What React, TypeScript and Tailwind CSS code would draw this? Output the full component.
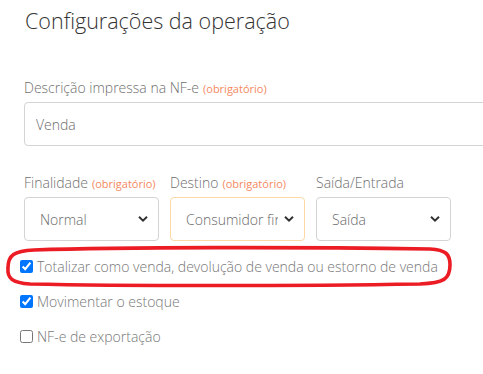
import { useState } from 'react';

// Operation settings form fragment — NF-e description, three selects
// and the totalizer / stock / export checkboxes. The red hand-drawn
// ring is an annotation overlay sitting on top of the first checkbox.

const font = { fontFamily: '"Open Sans", "Noto Sans", sans-serif' };

function Required() {
  return <span className="ml-1 text-[11px] font-normal text-[#f4895f]">(obrigatório)</span>;
}

function Chevron() {
  return (
    <svg
      viewBox="0 0 10 7"
      className="pointer-events-none absolute right-[11px] top-1/2 h-[7px] w-[10px] -translate-y-1/2"
    >
      <path d="M1 1.2 5 5.2 9 1.2" fill="none" stroke="#333" strokeWidth="2" />
    </svg>
  );
}

function SelectField({
  label,
  required,
  options,
  highlight,
}: {
  label: string;
  required?: boolean;
  options: string[];
  highlight?: boolean;
}) {
  return (
    <div className="flex w-[135px] flex-col">
      <label className="h-[22px] whitespace-nowrap text-[14px] leading-[22px] text-[#6f6f6f]">
        {label}
        {required && <Required />}
      </label>
      <div className="relative mt-[3px]">
        <select
          className={`h-[44px] w-full appearance-none overflow-hidden rounded-[4px] border bg-white pl-[15px] pr-[26px] text-[14px] font-light text-[#6a6a6a] outline-none ${
            highlight ? 'border-[#fcd9a4]' : 'border-[#d4d4d4]'
          }`}
          style={font}
          defaultValue={options[0]}
        >
          {options.map((o) => (
            <option key={o}>{o}</option>
          ))}
        </select>
        <Chevron />
      </div>
    </div>
  );
}

function Check({ label, checked }: { label: string; checked?: boolean }) {
  const [on, setOn] = useState(!!checked);
  return (
    <label className="flex h-[35px] items-center text-[14px] text-[#777]">
      <input
        type="checkbox"
        checked={on}
        onChange={() => setOn((v) => !v)}
        className="m-0 ml-[20px] mr-[4px] h-[13px] w-[13px] accent-[#0075ff]"
      />
      {label}
    </label>
  );
}

export default function App() {
  return (
    <div className="relative h-[374px] w-[483px] overflow-hidden bg-white font-light" style={font}>
      <h1 className="pl-[25px] pt-[5px] text-[21.5px] leading-[32px] text-[#333]">
        Configurações da operação
      </h1>

      <div className="mt-[40px] pl-[24px]">
        <label className="block h-[22px] whitespace-nowrap text-[14px] leading-[22px] text-[#6f6f6f]">
          Descrição impressa na NF-e
          <Required />
        </label>
        <input
          defaultValue="Venda"
          className="mt-[3px] h-[44px] w-[500px] rounded-[4px] border border-[#d4d4d4] px-[11px] text-[14px] font-light text-[#6a6a6a] outline-none"
          style={font}
        />
      </div>

      <div className="mt-[26px] flex gap-[11px] pl-[24px]">
        <SelectField label="Finalidade" required options={['Normal']} />
        <SelectField label="Destino" required highlight options={['Consumidor final']} />
        <SelectField label="Saída/Entrada" options={['Saída']} />
      </div>

      <div className="mt-[8px] flex flex-col">
        <Check label="Totalizar como venda, devolução de venda ou estorno de venda" checked />
        <Check label="Movimentar o estoque" checked />
        <Check label="NF-e de exportação" />
      </div>

      {/* annotation ring drawn over the first checkbox row */}
      <svg
        viewBox="0 0 483 374"
        className="pointer-events-none absolute inset-0 h-[374px] w-[483px]"
      >
        <path
          d="M34 250 C120 247 300 247 430 249 C446 250 450 254 450 265 C450 279 444 283 420 284 C300 286 120 286 30 284 C12 283 7 278 8 268 C8 255 14 251 34 250 Z"
          fill="none"
          stroke="#ec1c24"
          strokeWidth="3.6"
        />
      </svg>
    </div>
  );
}
